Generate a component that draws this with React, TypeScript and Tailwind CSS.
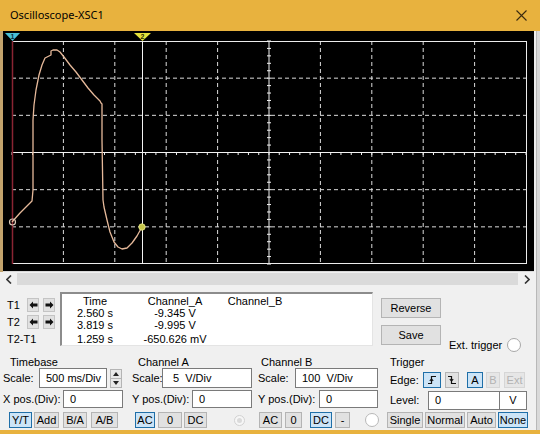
import React from "react";

const font = { fontFamily: '"Liberation Sans", Arial, sans-serif' };

function Screen() {
  const xs = Array.from({ length: 11 }, (_, i) => 12 + i * 51.4);
  const ys = Array.from({ length: 7 }, (_, j) => 41 + j * 37.17);
  const ticksX = Array.from({ length: 51 }, (_, k) => 12 + k * 10.28);
  const ticksY = Array.from({ length: 31 }, (_, k) => 41 + k * 7.434);
  const wave =
    "M12,222 L20,213 L28,205 L32,201 L33,190 L33,120 L34,105 L36,90 L39,75 L42,65 L45,58 L49,56 L51,55 L51,51 L53,50 L57,50 L60,52 L64,57 L70,65 L76,72 L82,80 L88,88 L94,95 L100,101 L101,103 L102,104 L102,140 L103,200 L104,207 L107,220 L110,232 L114,242 L118,247 L122,249 L127,248 L132,243 L137,236 L142,227";

  return (
    <div className="h-[241px] w-[534px] bg-black border-l-[3px] border-[#c3a36c]">
      <svg width="531" height="241" viewBox="3 31 531 241">
        {xs.slice(1, 10).map((x, i) =>
          i === 4 ? null : (
            <line key={"v" + i} x1={x} y1={41} x2={x} y2={264} stroke="#dcdcdc" strokeDasharray="4 3" />
          )
        )}
        {ys.slice(1, 6).map((y, j) =>
          j === 2 ? null : (
            <line key={"h" + j} x1={12} y1={y} x2={526} y2={y} stroke="#dcdcdc" strokeDasharray="4 3" />
          )
        )}
        {/* center axes with ticks */}
        <line x1={12} y1={152.5} x2={526} y2={152.5} stroke="#f2f2f2" />
        <line x1={269} y1={41} x2={269} y2={264} stroke="#f2f2f2" />
        {ticksX.map((x, k) => (
          <line key={"tx" + k} x1={x} y1={152} x2={x} y2={155} stroke="#f2f2f2" />
        ))}
        {ticksY.map((y, k) => (
          <line key={"ty" + k} x1={267} y1={y} x2={271} y2={y} stroke="#f2f2f2" />
        ))}
        <rect x={12.5} y={41.5} width={514} height={222} fill="none" stroke="#ececec" />
        <line x1={3} y1={271.5} x2={534} y2={271.5} stroke="#d8d8d8" />

        {/* cursors */}
        <line x1={12.5} y1={41} x2={12.5} y2={264} stroke="#8a2433" strokeWidth={1.5} />
        <line x1={142.5} y1={41} x2={142.5} y2={264} stroke="#f4f4f4" />
        <polygon points="5,33 20,33 12.5,41" fill="#49c0d6" />
        <text x={12.5} y={39} fontSize="7" textAnchor="middle" fill="#0a2a3a" fontFamily="Liberation Sans, sans-serif" fontWeight="bold">
          1
        </text>
        <polygon points="134,33 151,33 142.5,41" fill="#e4e23c" />
        <text x={142.5} y={39} fontSize="7" textAnchor="middle" fill="#2a2a00" fontFamily="Liberation Sans, sans-serif" fontWeight="bold">
          2
        </text>

        {/* trace */}
        <path d={wave} fill="none" stroke="#e6b99a" strokeWidth={1.3} strokeLinejoin="round" />
        <circle cx={12.5} cy={222} r={3} fill="none" stroke="#d9c8b8" strokeWidth={1.2} />
        <circle cx={142} cy={227} r={3.2} fill="#c5c54a" stroke="#e8e88a" strokeWidth={0.8} />
      </svg>
    </div>
  );
}

function ScrollBar() {
  return (
    <div className="h-[14px] flex items-center">
      <div className="w-[17px] flex justify-center">
        <svg width="6" height="9" viewBox="0 0 6 9">
          <path d="M5 0.5 L1 4.5 L5 8.5" fill="none" stroke="#333" strokeWidth="1.6" />
        </svg>
      </div>
      <div className="w-[501px] h-[12px] bg-[#dadada]" />
      <div className="w-[18px] flex justify-center">
        <svg width="6" height="9" viewBox="0 0 6 9">
          <path d="M1 0.5 L5 4.5 L1 8.5" fill="none" stroke="#333" strokeWidth="1.6" />
        </svg>
      </div>
    </div>
  );
}

type Kind = "normal" | "active" | "disabled";

function Btn({ kind = "normal", className = "", children }: { kind?: Kind; className?: string; children: React.ReactNode }) {
  const look =
    kind === "active"
      ? "bg-[#cce4f7] border-[#1f6fa8]"
      : kind === "disabled"
        ? "bg-[#e6e6e6] border-[#d6d6d6] text-[#b2b2b2]"
        : "bg-[#e1e1e1] border-[#b4b4b4]";
  return (
    <div className={`h-[16px] flex items-center justify-center border text-[11px] leading-none ${look} ${className}`}>
      {children}
    </div>
  );
}

function Field({ className = "", children }: { className?: string; children?: React.ReactNode }) {
  return (
    <div className={`bg-white border border-[#7a7a7a] flex items-center pl-[6px] text-[11px] ${className}`}>
      {children}
    </div>
  );
}

function ArrowBtn({ dir }: { dir: "left" | "right" }) {
  return (
    <div className="w-[12px] h-[14px] bg-[#e1e1e1] border border-[#c4c4c4] flex items-center justify-center">
      <svg width="9" height="8" viewBox="0 0 9 8">
        {dir === "left" ? (
          <path d="M0.5 4 L4 0.5 L4 2.6 L8.5 2.6 L8.5 5.4 L4 5.4 L4 7.5 Z" fill="#111" />
        ) : (
          <path d="M8.5 4 L5 0.5 L5 2.6 L0.5 2.6 L0.5 5.4 L5 5.4 L5 7.5 Z" fill="#111" />
        )}
      </svg>
    </div>
  );
}

function Readout() {
  const rows = [
    ["2.560 s", "-9.345 V", ""],
    ["3.819 s", "-9.995 V", ""],
  ];
  return (
    <div className="w-[313px] h-[54px] bg-white border-t-2 border-l-2 border-[#8c8c8c] border-r border-b border-r-[#e4e4e4] border-b-[#e4e4e4] pt-[1px] text-[11px] leading-[12px]">
      <div className="grid grid-cols-[66px_94px_66px]">
        <div className="text-center">Time</div>
        <div className="text-center">Channel_A</div>
        <div className="text-center">Channel_B</div>
        {rows.map((r, i) => (
          <React.Fragment key={i}>
            <div className="text-center">{r[0]}</div>
            <div className="text-center">{r[1]}</div>
            <div className="text-center">{r[2]}</div>
          </React.Fragment>
        ))}
        <div className="text-center mt-[2px]">1.259 s</div>
        <div className="text-center mt-[2px]">-650.626 mV</div>
        <div className="text-center mt-[2px]"></div>
      </div>
    </div>
  );
}

function TopControls() {
  return (
    <div className="flex h-[66px] pt-[6px] text-[11px]">
      <div className="w-[60px] pl-[7px] pt-[6px] flex flex-col">
        <div className="flex items-center h-[14px]">
          <span className="w-[20px]">T1</span>
          <ArrowBtn dir="left" />
          <div className="w-[4px]" />
          <ArrowBtn dir="right" />
        </div>
        <div className="flex items-center h-[14px] mt-[3px]">
          <span className="w-[20px]">T2</span>
          <ArrowBtn dir="left" />
          <div className="w-[4px]" />
          <ArrowBtn dir="right" />
        </div>
        <div className="h-[12px] leading-[12px] mt-[4px]">T2-T1</div>
      </div>
      <Readout />
      <div className="ml-[8px] w-[60px] flex flex-col">
        <div className="mt-[6px] h-[20px] bg-[#e1e1e1] border border-[#b4b4b4] flex items-center justify-center">Reverse</div>
        <div className="mt-[7px] h-[20px] bg-[#e1e1e1] border border-[#b4b4b4] flex items-center justify-center">Save</div>
      </div>
      <div className="ml-[8px] flex items-center h-[14px] mt-[46px]">
        <span>Ext. trigger</span>
        <div className="ml-[5px] w-[14px] h-[14px] rounded-full border border-[#a8a8a8] bg-white" />
      </div>
    </div>
  );
}

function Spinner() {
  return (
    <div className="ml-[3px] w-[12px] h-[19px] flex flex-col border border-[#b4b4b4] bg-[#e8e8e8]">
      <div className="flex-1 flex items-center justify-center border-b border-[#b4b4b4]">
        <svg width="6" height="4" viewBox="0 0 6 4">
          <path d="M0 4 L3 0 L6 4 Z" fill="#222" />
        </svg>
      </div>
      <div className="flex-1 flex items-center justify-center">
        <svg width="6" height="4" viewBox="0 0 6 4">
          <path d="M0 0 L3 4 L6 0 Z" fill="#222" />
        </svg>
      </div>
    </div>
  );
}

function EdgeIcon({ rising }: { rising: boolean }) {
  return (
    <svg width="10" height="10" viewBox="0 0 10 10">
      {rising ? (
        <>
          <path d="M1 8.5 H4.5 V1.5 H9" fill="none" stroke="#111" strokeWidth="1.2" />
          <path d="M2.8 5.8 L4.5 4 L6.2 5.8" fill="none" stroke="#111" strokeWidth="1.1" />
        </>
      ) : (
        <>
          <path d="M1 1.5 H4.5 V8.5 H9" fill="none" stroke="#111" strokeWidth="1.2" />
          <path d="M2.8 4.2 L4.5 6 L6.2 4.2" fill="none" stroke="#111" strokeWidth="1.1" />
        </>
      )}
    </svg>
  );
}

function Groups() {
  return (
    <div className="flex pt-[4px] text-[11px]">
      {/* Timebase */}
      <div className="w-[129px] pl-[3px] flex flex-col">
        <div className="h-[12px] leading-[12px] pl-[7px]">Timebase</div>
        <div className="h-[20px] flex items-center">
          <span className="w-[36px]">Scale:</span>
          <Field className="w-[68px] h-[20px] border-[#2b7cc4]">500 ms/Div</Field>
          <Spinner />
        </div>
        <div className="h-[18px] mt-[2px] flex items-center">
          <span className="w-[60px]">X pos.(Div):</span>
          <Field className="w-[60px] h-[18px]">0</Field>
        </div>
        <div className="h-[16px] mt-[4px] flex items-center">
          <Btn kind="active" className="ml-[6px] w-[23px]">Y/T</Btn>
          <Btn className="ml-[2px] w-[25px]">Add</Btn>
          <Btn className="ml-[4px] w-[24px]">B/A</Btn>
          <Btn className="ml-[4px] w-[27px]">A/B</Btn>
        </div>
      </div>

      {/* Channel A */}
      <div className="w-[126px] pl-[3px] flex flex-col">
        <div className="h-[12px] leading-[12px] pl-[6px]">Channel A</div>
        <div className="h-[20px] flex items-center">
          <span className="w-[30px]">Scale:</span>
          <Field className="w-[90px] h-[20px] pl-[10px]">5&nbsp;&nbsp;V/Div</Field>
        </div>
        <div className="h-[18px] mt-[2px] flex items-center">
          <span className="w-[60px]">Y pos.(Div):</span>
          <Field className="w-[60px] h-[18px]">0</Field>
        </div>
        <div className="h-[16px] mt-[4px] flex items-center">
          <Btn kind="active" className="ml-[3px] w-[20px]">AC</Btn>
          <Btn className="ml-[3px] w-[24px]">0</Btn>
          <Btn className="ml-[2px] w-[23px]">DC</Btn>
          <div className="ml-[27px] w-[11px] h-[11px] rounded-full border border-[#d2d2d2] bg-[#f6f6f6] flex items-center justify-center">
            <div className="w-[5px] h-[5px] rounded-full bg-[#dadada]" />
          </div>
        </div>
      </div>

      {/* Channel B */}
      <div className="w-[132px] pl-[3px] flex flex-col">
        <div className="h-[12px] leading-[12px] pl-[3px]">Channel B</div>
        <div className="h-[20px] flex items-center">
          <span className="w-[37px]">Scale:</span>
          <Field className="w-[83px] h-[20px]">100&nbsp;&nbsp;V/Div</Field>
        </div>
        <div className="h-[18px] mt-[2px] flex items-center">
          <span className="w-[61px]">Y pos.(Div):</span>
          <Field className="w-[59px] h-[18px]">0</Field>
        </div>
        <div className="h-[16px] mt-[4px] flex items-center">
          <Btn className="ml-[1px] w-[23px]">AC</Btn>
          <Btn className="ml-[3px] w-[17px]">0</Btn>
          <Btn kind="active" className="ml-[8px] w-[22px]">DC</Btn>
          <Btn className="ml-[3px] w-[15px]">-</Btn>
          <div className="ml-[15px] w-[14px] h-[14px] rounded-full border border-[#b8b8b8] bg-white" />
        </div>
      </div>

      {/* Trigger */}
      <div className="flex-1 pl-[3px] flex flex-col">
        <div className="h-[12px] leading-[12px]">Trigger</div>
        <div className="h-[20px] flex items-center">
          <span className="w-[33px] mt-[4px]">Edge:</span>
          <Btn kind="active" className="mt-[4px] w-[18px] h-[15px]">
            <EdgeIcon rising />
          </Btn>
          <Btn className="mt-[4px] ml-[4px] w-[14px] h-[15px]">
            <EdgeIcon rising={false} />
          </Btn>
          <Btn kind="active" className="mt-[4px] ml-[8px] w-[16px] h-[15px]">A</Btn>
          <Btn kind="disabled" className="mt-[4px] ml-[3px] w-[14px] h-[15px]">B</Btn>
          <Btn kind="disabled" className="mt-[4px] ml-[4px] w-[21px] h-[15px]">Ext</Btn>
        </div>
        <div className="h-[20px] mt-[2px] flex items-center">
          <span className="w-[38px]">Level:</span>
          <Field className="w-[72px] h-[19px]">0</Field>
          <div className="w-[27px] h-[19px] bg-white border border-l-0 border-[#7a7a7a] flex items-center justify-center">V</div>
        </div>
        <div className="h-[16px] mt-[2px] flex items-center -ml-[3px]">
          <Btn className="w-[36px]">Single</Btn>
          <Btn className="ml-[2px] w-[40px]">Normal</Btn>
          <Btn className="ml-[2px] w-[29px]">Auto</Btn>
          <Btn kind="active" className="ml-[2px] w-[30px]">None</Btn>
        </div>
      </div>
    </div>
  );
}

export default function App() {
  return (
    <div className="w-[540px] h-[434px] bg-[#e8b23e] flex flex-col overflow-hidden text-black" style={font}>
      <div className="h-[31px] flex items-center justify-between pl-[10px] pr-[13px]">
        <span className="text-[11px]" style={{ fontFamily: '"Noto Sans", "Liberation Sans", sans-serif' }}>
          Oscilloscope-XSC1
        </span>
        <svg width="11" height="11" viewBox="0 0 11 11">
          <path d="M0.5 0.5 L10.5 10.5 M10.5 0.5 L0.5 10.5" stroke="#3a2a10" strokeWidth="1.1" />
        </svg>
      </div>
      <div className="flex h-[399px]">
        <div className="w-[536px] bg-[#f0f0f0] flex flex-col">
          <Screen />
          <ScrollBar />
          <TopControls />
          <Groups />
        </div>
        <div className="flex-1 bg-[#d9d9d9] border-l border-[#b8b8b8]" />
      </div>
    </div>
  );
}
